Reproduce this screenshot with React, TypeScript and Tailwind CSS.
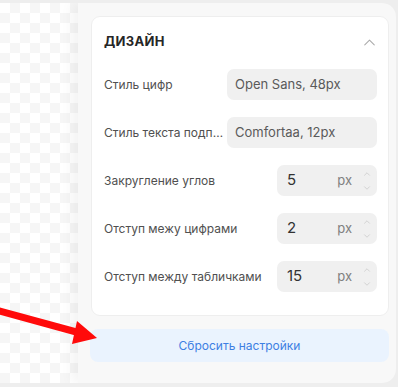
import { ChevronUp, ChevronDown } from 'lucide-react';

const font = { fontFamily: 'Inter, "Noto Sans", sans-serif' };

function TextRow({ label, value }: { label: string; value: string }) {
  return (
    <div className="flex items-center h-[31px]">
      <span className="w-[123px] shrink-0 truncate text-[12px] text-[#505050]">{label}</span>
      <div className="flex-1 h-full rounded-[7px] bg-[#f0f0f0] flex items-center pl-2 text-[13px] text-[#5a5a5a]">
        {value}
      </div>
    </div>
  );
}

function NumberRow({ label, value }: { label: string; value: string }) {
  return (
    <div className="flex items-center h-[31px]">
      <span className="flex-1 truncate text-[12px] text-[#505050]">{label}</span>
      <div className="w-[100px] h-full rounded-[7px] bg-[#f0f0f0] flex items-center pl-[10px] pr-[5px]">
        <span className="flex-1 text-[15px] text-[#333]">{value}</span>
        <span className="text-[13px] text-[#808080] mr-[10px]">px</span>
        <div className="flex flex-col items-center gap-[4px] text-[#bdbdbd]">
          <ChevronUp size={10} strokeWidth={1.4} />
          <ChevronDown size={10} strokeWidth={1.4} />
        </div>
      </div>
    </div>
  );
}

export default function App() {
  return (
    <div className="w-[398px] h-[387px] bg-[#eeeeee] pt-[3px] pb-[4px] pr-[2px] overflow-hidden relative" style={font}>
      <div className="flex h-full rounded-r-[14px] overflow-hidden">
        <div className="flex-1 bg-[conic-gradient(#f6f6f6_25%,#ffffff_0_50%,#f6f6f6_0_75%,#ffffff_0)] bg-[length:20px_20px]" />
        <div className="w-[318px] shrink-0 bg-[#f8f8f8] shadow-[-6px_0_12px_rgba(0,0,0,0.05)] pl-[13px] pr-[7px] pt-[13px] flex flex-col">
          <div className="bg-white rounded-[9px] border border-[#eeeeee] pl-[12px] pr-[11px] pt-[15px] pb-[23px]">
            <div className="flex items-center justify-between h-[20px]">
              <span className="text-[13px] font-bold text-[#262626] tracking-[0.3px]">ДИЗАЙН</span>
              <ChevronUp size={19} strokeWidth={1.3} className="text-[#aaa] -mr-[2px]" />
            </div>
            <div className="flex flex-col gap-[17px] mt-[17px]">
              <TextRow label="Стиль цифр" value="Open Sans, 48px" />
              <TextRow label="Стиль текста подписей" value="Comfortaa, 12px" />
              <NumberRow label="Закругление углов" value="5" />
              <NumberRow label="Отступ межу цифрами" value="2" />
              <NumberRow label="Отступ между табличками" value="15" />
            </div>
          </div>
          <button className="mt-[13px] h-[33px] -ml-[1px] rounded-[8px] bg-[#eaf3fe] text-[12px] text-[#3d7fe3]">
            Сбросить настройки
          </button>
        </div>
      </div>
      <svg className="absolute left-0 top-0" width="110" height="387" viewBox="0 0 110 387">
        <line x1="-4" y1="310" x2="80" y2="333" stroke="#ff0a0a" strokeWidth="7" />
        <polygon points="97,338 77,321 72,344" fill="#ff0a0a" />
      </svg>
    </div>
  );
}
